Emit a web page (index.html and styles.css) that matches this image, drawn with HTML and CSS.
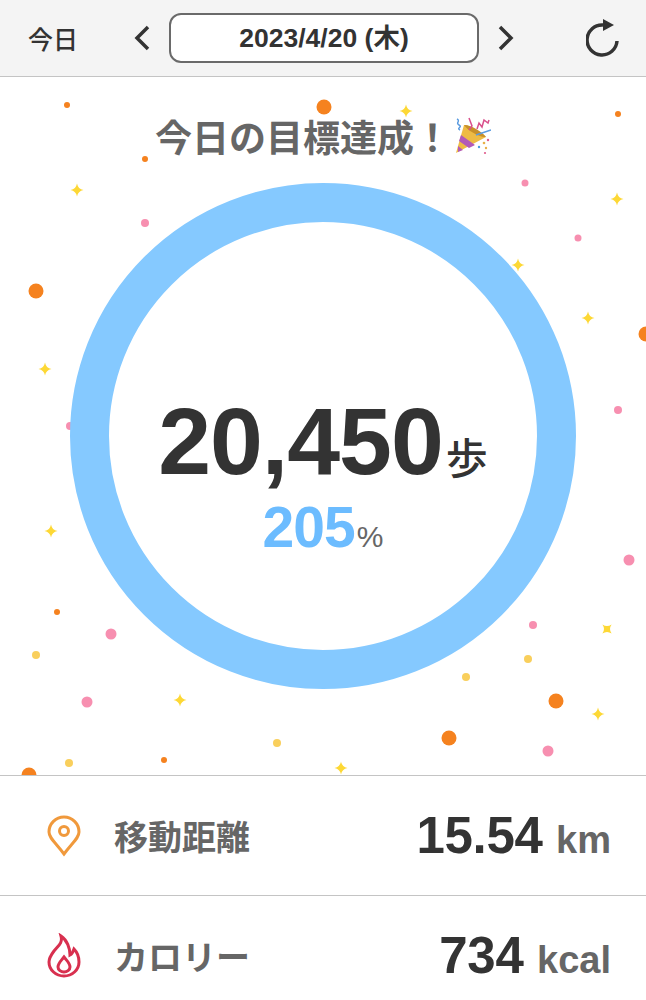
FILE: index.html
```html
<!DOCTYPE html>
<html lang="ja">

<head>
    <meta charset="utf-8">
    <title>今日の歩数</title>
    <link rel="stylesheet" href="styles.css">
</head>

<body>

    <div id="head">
        <span class="today">今日</span>
        <div class="dateNav">
            <svg class="chev" width="16" height="26" viewBox="0 0 16 26">
                <path d="M14 2 3 13l11 11" />
            </svg>
            <div class="dateBox">2023/4/20 (木)</div>
            <svg class="chev" width="16" height="26" viewBox="0 0 16 26">
                <path d="M2 2l11 11L2 24" />
            </svg>
        </div>
        <svg class="reload" width="34" height="38" viewBox="0 0 34 38">
            <path class="reloadArc" d="M17 6A15 15 0 1 0 31 22" />
            <path class="reloadTip" d="M17 0l11 6-11 6z" />
        </svg>
    </div>

    <div id="hero">
        <!-- 紙吹雪 -->
        <svg class="confetti" width="646" height="698" viewBox="0 77 646 698">
            <defs>
                <path id="star" d="M0-6.500Q1-1 6.500 0 1 1 0 6.500-1 1-6.500 0-1-1 0-6.500z" />
            </defs>
            <g class="orange">
                <circle cx="67" cy="105" r="3" />
                <circle cx="145" cy="159" r="3" />
                <circle cx="618" cy="114" r="3" />
                <circle cx="57" cy="612" r="3" />
                <circle cx="164" cy="760" r="3" />
                <circle cx="324" cy="107" r="7.500" />
                <circle cx="36" cy="291" r="7.500" />
                <circle cx="646" cy="334" r="7.500" />
                <circle cx="556" cy="701" r="7.500" />
                <circle cx="449" cy="738" r="7.500" />
                <circle cx="29" cy="775" r="7.500" />
            </g>
            <g class="pink">
                <circle cx="525" cy="183" r="3.500" />
                <circle cx="145" cy="223" r="4" />
                <circle cx="578" cy="238" r="3.500" />
                <circle cx="618" cy="410" r="4" />
                <circle cx="70" cy="426" r="4" />
                <circle cx="629" cy="560" r="5.500" />
                <circle cx="533" cy="625" r="4" />
                <circle cx="111" cy="634" r="5.500" />
                <circle cx="87" cy="702" r="5.500" />
                <circle cx="548" cy="751" r="5.500" />
            </g>
            <g class="dots">
                <circle cx="36" cy="655" r="4" />
                <circle cx="528" cy="659" r="4" />
                <circle cx="466" cy="677" r="4" />
                <circle cx="277" cy="743" r="4" />
                <circle cx="69" cy="763" r="4" />
            </g>
            <g class="stars">
                <use href="#star" x="406" y="111" />
                <use href="#star" x="77" y="190" />
                <use href="#star" x="617" y="199" />
                <use href="#star" x="518" y="265" />
                <use href="#star" x="588" y="318" />
                <use href="#star" x="45" y="369" />
                <use href="#star" x="51" y="531" />
                <use href="#star" transform="translate(607 629) rotate(45)" />
                <use href="#star" x="180" y="700" />
                <use href="#star" x="598" y="714" />
                <use href="#star" x="341" y="768" />
            </g>
        </svg>

        <h2 class="goal">今日の目標達成！<svg class="popper" width="38" height="40" viewBox="0 0 38 40">
                <path d="M3 37 11 9c6 0 17 7 22 12z" fill="#eebb45" />
                <path d="M8 19l14 10-6 3-10-7zM5 30l5 4-5 2z" fill="#b25ab8" />
                <path d="M11 9c5-1 19 7 22 12-6 1-19-7-22-12z" fill="#c8902a" />
                <path class="blueLine" d="M4 3c4 2-2 4 2 6s-3 3 1 5M23 19l15-5" />
                <path class="pinkLine" d="M16 2l3 8-3 4M24 13l2-6 3 4 2-7 4 3 1-3" />
                <circle cx="31" cy="27" r="1.300" fill="#e8b04a" />
                <circle cx="35" cy="24" r="1.200" fill="#e05c8c" />
                <circle cx="33" cy="32" r="1.200" fill="#e8b04a" />
                <circle cx="26" cy="31" r="1.200" fill="#4a9be0" />
                <circle cx="32" cy="37" r="1.100" fill="#e05c8c" />
            </svg></h2>

        <div class="ring">
            <svg class="ringLine" width="506" height="506" viewBox="0 0 506 506">
                <circle cx="253" cy="253" r="233.500" />
            </svg>
            <div class="ringText">
                <div class="steps"><b>20,450</b><span>歩</span></div>
                <div class="rate"><b>205</b><span>%</span></div>
            </div>
        </div>
    </div>

    <div class="row">
        <svg class="rowIcon" width="36" height="44" viewBox="0 0 36 44">
            <path class="pin" d="M18 40C10 29 3 24 3 18a15 15 0 0 1 30 0c0 6-7 11-15 22z" />
            <circle class="pin" cx="18" cy="17" r="4.500" />
        </svg>
        <span class="rowName">移動距離</span>
        <span class="rowValue"><b>15.54</b> <span>km</span></span>
    </div>
    <div class="row">
        <svg class="rowIcon" width="36" height="46" viewBox="0 0 36 46">
            <path class="fire" d="M15 3c2 7-3 10-7 15-3 4-5 7-5 11 0 8 7 14 15 14s15-6 15-14c0-5-2-10-5-13-1 3-2 5-4 6 0-7-3-15-9-19z" />
            <path class="fire" d="M18 24c-3 4-6 6-6 10 0 3 3 5 6 5s6-2 6-5c0-4-3-6-6-10z" />
        </svg>
        <span class="rowName">カロリー</span>
        <span class="rowValue"><b>734</b> <span>kcal</span></span>
    </div>

</body>

</html>
```

FILE: styles.css
```css
body {
    margin: 0;
    width: 646px;
    height: 1000px;
    overflow: hidden;
    background: #fff;
    font-family: "Liberation Sans", "Noto Sans CJK JP", sans-serif;
    color: #333;
}

#head {
    display: flex;
    align-items: center;
    height: 76px;
    padding: 0 26px 0 28px;
    background: #f4f4f4;
    border-bottom: 1px solid #c4c4c4;
}

#head .today {
    width: 50px;
    font-size: 25px;
    font-weight: 500;
    color: #333;
}

.dateNav {
    display: flex;
    align-items: center;
    gap: 19px;
    margin-left: 56px;
}

.chev path {
    fill: none;
    stroke: #333;
    stroke-width: 3.500;
}

.dateBox {
    width: 306px;
    height: 46px;
    line-height: 46px;
    text-align: center;
    font-size: 26.500px;
    font-weight: bold;
    background: #fff;
    border: 2px solid #6a6a6a;
    border-radius: 12px;
}

.reload {
    margin-left: auto;
}

.reloadArc {
    fill: none;
    stroke: #333;
    stroke-width: 3.500;
}

.reloadTip {
    fill: #333;
}

#hero {
    position: relative;
    height: 698px;
    border-bottom: 1px solid #c4c4c4;
    overflow: hidden;
}

.confetti {
    position: absolute;
    left: 0;
    top: 0;
}

.orange {
    fill: #f5821f;
}

.pink {
    fill: #f78fb0;
}

.dots {
    fill: #f9cf5c;
}

.stars {
    fill: #fdd835;
}

.goal {
    position: relative;
    display: flex;
    align-items: center;
    justify-content: center;
    height: 44px;
    margin: 37px 0 0;
    font-size: 37px;
    font-weight: bold;
    color: #666;
}

.popper {
    margin-left: 2px;
}

.blueLine {
    fill: none;
    stroke: #5a9be0;
    stroke-width: 1.500;
}

.pinkLine {
    fill: none;
    stroke: #d9508c;
    stroke-width: 1.500;
}

.ring {
    position: relative;
    display: flex;
    align-items: center;
    justify-content: center;
    width: 506px;
    height: 506px;
    margin: 25px auto 0;
}

.ringLine {
    position: absolute;
    left: 0;
    top: 0;
}

.ringLine circle {
    fill: none;
    stroke: #85c9ff;
    stroke-width: 39;
}

.ringText {
    position: relative;
    padding-top: 77px;
    text-align: center;
}

.steps b {
    font-size: 95px;
    line-height: 92px;
    letter-spacing: -1px;
}

.steps span {
    font-size: 42px;
    font-weight: 500;
    margin-left: 3px;
}

.rate {
    margin-top: 12px;
}

.rate b {
    font-size: 57px;
    line-height: 56px;
    color: #6cbcff;
    letter-spacing: -1px;
}

.rate span {
    font-size: 30px;
    color: #666;
    margin-left: 2px;
}

.row {
    display: flex;
    align-items: center;
    height: 119px;
    padding: 0 35px 0 46px;
    border-bottom: 1px solid #c4c4c4;
}

.row:last-child {
    border-bottom: 0;
}

.rowIcon {
    flex: none;
}

.rowName {
    margin-left: 32px;
    font-size: 34px;
    font-weight: bold;
    color: #666;
}

.rowValue {
    margin-left: auto;
    color: #666;
    font-size: 38px;
    font-weight: bold;
}

.rowValue span {
    margin-left: 3px;
}

.rowValue b {
    font-size: 51px;
    color: #333;
    letter-spacing: -0.3px;
}

.pin {
    fill: none;
    stroke: #f0993c;
    stroke-width: 3;
}

.fire {
    fill: none;
    stroke: #d8304f;
    stroke-width: 3;
}
```
